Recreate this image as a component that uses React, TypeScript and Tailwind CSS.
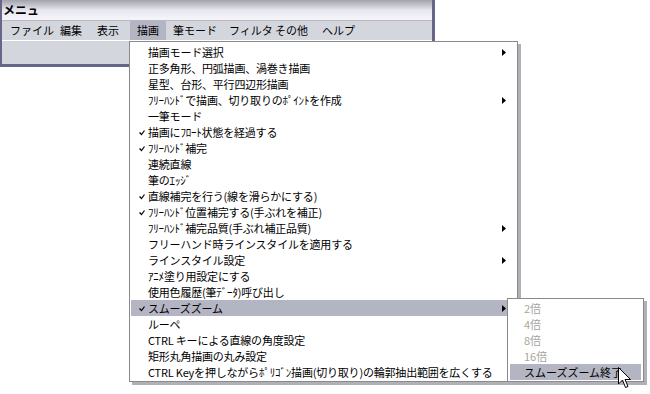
import React from "react";

const items: { label: string; check?: boolean; sub?: boolean; active?: boolean }[] = [
  { label: "描画モード選択", sub: true },
  { label: "正多角形、円弧描画、渦巻き描画" },
  { label: "星型、台形、平行四辺形描画" },
  { label: "ﾌﾘｰﾊﾝﾄﾞで描画、切り取りのﾎﾟｲﾝﾄを作成", sub: true },
  { label: "一筆モード" },
  { label: "描画にﾌﾛｰﾄ状態を経過する", check: true },
  { label: "ﾌﾘｰﾊﾝﾄﾞ補完", check: true },
  { label: "連続直線" },
  { label: "筆のｴｯｼﾞ" },
  { label: "直線補完を行う(線を滑らかにする)", check: true },
  { label: "ﾌﾘｰﾊﾝﾄﾞ位置補完する(手ぶれを補正)", check: true },
  { label: "ﾌﾘｰﾊﾝﾄﾞ補完品質(手ぶれ補正品質)", sub: true },
  { label: "フリーハンド時ラインスタイルを適用する" },
  { label: "ラインスタイル設定", sub: true },
  { label: "ｱﾆﾒ塗り用設定にする" },
  { label: "使用色履歴(筆ﾃﾞｰﾀ)呼び出し" },
  { label: "スムーズズーム", check: true, sub: true, active: true },
  { label: "ルーペ" },
  { label: "CTRL キーによる直線の角度設定" },
  { label: "矩形丸角描画の丸み設定" },
  { label: "CTRL Keyを押しながらﾎﾟﾘｺﾞﾝ描画(切り取り)の輪郭抽出範囲を広くする" },
];

const menus: { label: string; w: string; active?: boolean }[] = [
  { label: "ファイル", w: "w-[50px]" },
  { label: "編集", w: "w-[37px]" },
  { label: "表示", w: "w-[40px]" },
  { label: "描画", w: "w-[36px]", active: true },
  { label: "筆モード", w: "w-[56px]" },
  { label: "フィルタ", w: "w-[46px]" },
  { label: "その他", w: "w-[47px]" },
  { label: "ヘルプ", w: "w-[40px]" },
];

const zooms = ["2倍", "4倍", "8倍", "16倍"];

function Check() {
  return (
    <svg width="6" height="6" viewBox="0 0 6 6" className="absolute left-[8px] top-[6px]">
      <path d="M0.5 2.5 L2.5 4.5 L5.5 0.5" fill="none" stroke="#000" strokeWidth="1.2" />
    </svg>
  );
}

function Arrow() {
  return (
    <svg width="4" height="7" viewBox="0 0 4 7" className="absolute right-[10px] top-[5px]">
      <path d="M0 0 L4 3.5 L0 7 Z" fill="#000" />
    </svg>
  );
}

export default function App() {
  return (
    <div
      className="relative w-[650px] h-[394px] bg-white overflow-hidden text-[11px] text-black"
      style={{ fontFamily: '"Noto Sans CJK JP", "Noto Sans", sans-serif' }}
    >
      {/* Window */}
      <div className="w-[435px] h-[67px] border-l-2 border-r-[3px] border-b-[3px] border-[#66668a] bg-[#d4d6de] flex flex-col">
        <div className="h-[20px] bg-gradient-to-b from-[#a2a2aa] via-[#e6e6ee] to-[#f6f6fa] flex items-center px-[1px] font-bold text-[12px] leading-none">
          メニュ
        </div>
        <div className="h-[20px] flex items-stretch pl-[1px] border-t border-[#b8b8c4]">
          {menus.map((m) => (
            <div
              key={m.label}
              className={`${m.w} shrink-0 whitespace-nowrap flex items-center pl-[7px] text-[11px] leading-none ${m.active ? "bg-[#b4b5c3]" : ""}`}
            >
              {m.label}
            </div>
          ))}
        </div>
        <div className="flex-1 border-t border-white" />
      </div>

      {/* Dropdown */}
      <div className="absolute left-[129px] top-[41px] w-[389px] bg-white border border-[#8a8a8a] pt-[2px] pb-px shadow-[3px_3px_0_#b0b0b6]">
        {items.map((it) => (
          <div
            key={it.label}
            className={`relative h-[16px] leading-[16px] pl-[17px] mx-px whitespace-nowrap tracking-[-0.2px] ${it.active ? "bg-[#b4b5c3]" : ""}`}
          >
            {it.check && <Check />}
            {it.label}
            {it.sub && <Arrow />}
          </div>
        ))}
      </div>

      {/* Submenu */}
      <div className="absolute left-[507px] top-[298px] w-[137px] bg-white border border-[#8a8a8a] py-px shadow-[3px_3px_0_#b0b0b6]">
        {zooms.map((z) => (
          <div key={z} className="h-[16px] leading-[16px] pl-[16px] text-[#a6a69e]">
            {z}
          </div>
        ))}
        <div className="h-[16px] leading-[16px] pl-[14px] mx-[2px] bg-[#b4b5c3]">スムーズズーム終了</div>
      </div>

      {/* Cursor */}
      <svg width="14" height="23" viewBox="0 0 14 23" className="absolute left-[618px] top-[367px]">
        <path
          d="M0.5 0.5 L0.5 17 L4.5 13 L7.5 20.5 L10 19.5 L7 12.5 L12.5 12.5 Z"
          fill="#fff"
          stroke="#000"
          strokeWidth="1"
        />
      </svg>
    </div>
  );
}
